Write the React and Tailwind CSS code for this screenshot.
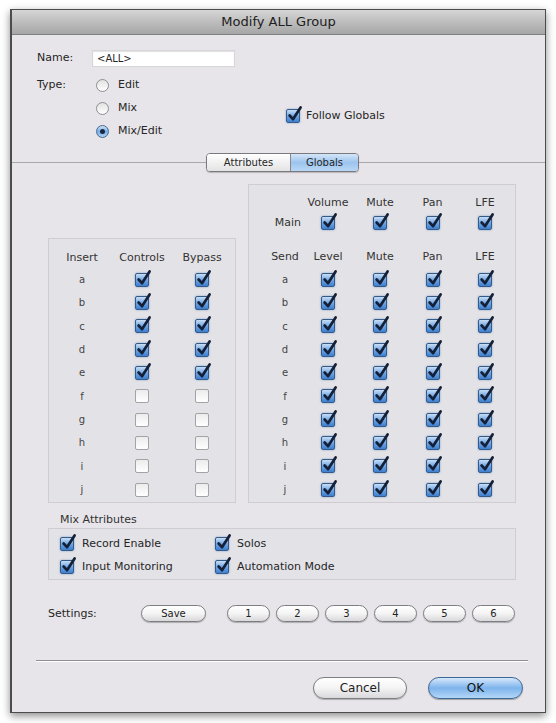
import React from "react";

const sends = ["a", "b", "c", "d", "e", "f", "g", "h", "i", "j"];

function Check({ on }) {
  return (
    <span className="relative inline-block w-[14px] h-[14px] shrink-0">
      <span
        className={
          on
            ? "absolute inset-0 rounded-[2px] border border-[#345b88] bg-gradient-to-b from-[#c9def5] via-[#6fa5e3] to-[#3f7fcf] shadow-[0_0_2px_rgba(70,120,190,0.7)]"
            : "absolute inset-0 rounded-[2px] border border-[#a3a3a6] bg-gradient-to-b from-[#ececec] to-white"
        }
      />
      {on && (
        <svg className="absolute -top-[4px] left-0 w-[17px] h-[18px]" viewBox="0 0 17 18">
          <path
            d="M3.6 10.5 L7 14.2 L14.6 2.4"
            fill="none"
            stroke="#142038"
            strokeWidth="2.7"
            strokeLinecap="round"
            strokeLinejoin="round"
          />
        </svg>
      )}
    </span>
  );
}

function Radio({ on }) {
  return (
    <span
      className={
        on
          ? "w-[13px] h-[13px] rounded-full border border-[#47698f] bg-gradient-to-b from-[#cfe2f7] via-[#78aee8] to-[#aed2f5] flex items-center justify-center"
          : "w-[13px] h-[13px] rounded-full border border-[#8e8e92] bg-gradient-to-b from-[#e2e2e2] to-white"
      }
    >
      {on && <span className="w-[5px] h-[5px] rounded-full bg-[#1b2740]" />}
    </span>
  );
}

function Pill({ children, className }) {
  return (
    <div
      className={
        "flex items-center justify-center rounded-full border border-[#7e7e82] bg-gradient-to-b from-white via-[#f4f4f4] to-[#d9d9dc] shadow-[0_1px_1px_rgba(0,0,0,0.25)] text-[#222] " +
        className
      }
    >
      {children}
    </div>
  );
}

export default function App() {
  return (
    <div className="min-h-screen bg-white pt-[9px] pl-[10px] [font-family:'DejaVu_Sans','Liberation_Sans',sans-serif] text-[11px] text-[#262626]">
      <div className="w-[536px] h-[704px] border border-[#4c4c4e] border-l-2 bg-[#e7e5e9] flex flex-col shadow-[0_3px_8px_rgba(0,0,0,0.45)]">
        {/* title bar */}
        <div className="h-[25px] shrink-0 flex items-center justify-center border-b border-[#7f7f82] bg-gradient-to-b from-[#d6d6d6] via-[#bdbdbd] to-[#a6a6a6] text-[13px] text-[#202020]">
          Modify ALL Group
        </div>

        {/* name / type */}
        <div className="pl-[25px]">
          <div className="mt-[14px] h-[18px] flex items-center">
            <div className="w-[55px]">Name:</div>
            <div className="w-[143px] h-[17px] bg-white border border-[#d6d6d6] shadow-[inset_0_1px_1px_rgba(0,0,0,0.12)] flex items-center pl-[4px] text-[10px]">
              &lt;ALL&gt;
            </div>
          </div>
          <div className="mt-[7px] flex">
            <div className="w-[55px] h-[23px] flex items-center">Type:</div>
            <div className="ml-[4px] w-[190px] flex flex-col">
              {[
                ["Edit", false],
                ["Mix", false],
                ["Mix/Edit", true],
              ].map(([t, on]) => (
                <div key={t} className="h-[23px] flex items-center gap-[9px]">
                  <Radio on={on} />
                  <span>{t}</span>
                </div>
              ))}
            </div>
            <div className="mt-[35px] h-[14px] flex items-center gap-[6px]">
              <Check on />
              <span>Follow Globals</span>
            </div>
          </div>
        </div>

        {/* tabs */}
        <div className="mt-[10px] h-[19px] flex items-center">
          <div className="w-[194px] h-px bg-[#a8a7ab]" />
          <div className="flex h-[19px] rounded-[4px] border border-[#7a7a7e] overflow-hidden text-[10px] shadow-[0_1px_1px_rgba(0,0,0,0.2)]">
            <div className="w-[84px] flex items-center justify-center bg-gradient-to-b from-white to-[#e3e3e3] border-r border-[#8a8a8e]">
              Attributes
            </div>
            <div className="w-[67px] flex items-center justify-center bg-gradient-to-b from-[#d5e6f8] via-[#9cc4ee] to-[#b9d7f5]">
              Globals
            </div>
          </div>
          <div className="flex-1 h-px bg-[#a8a7ab]" />
        </div>

        {/* globals tables */}
        <div className="mt-[12px] pl-[36px] flex items-end gap-[12px]">
          <div className="w-[188px] border border-[#cfcdd2] bg-[#e3e2e6] pt-[9px] pb-[1px] pl-[3px]">
            <div className="grid grid-cols-[60px_60px_60px] h-[20px] items-center text-[#333]">
              <div className="flex justify-center whitespace-nowrap">Insert</div>
              <div className="flex justify-center whitespace-nowrap">Controls</div>
              <div className="flex justify-center whitespace-nowrap">Bypass</div>
            </div>
            {sends.map((s, i) => (
              <div key={s} className="grid grid-cols-[60px_60px_60px] h-[23.33px] items-center">
                <div className="flex justify-center text-[10px] text-[#444]">{s}</div>
                <div className="flex justify-center">
                  <Check on={i < 5} />
                </div>
                <div className="flex justify-center">
                  <Check on={i < 5} />
                </div>
              </div>
            ))}
          </div>

          <div className="w-[268px] border border-[#cfcdd2] bg-[#e3e2e6] pt-[9px] pb-[1px] pl-[19px]">
            <div className="grid grid-cols-[34px_52px_52px_53px_52px] h-[18px] items-center text-[#333]">
              <div />
              <div className="flex justify-center">Volume</div>
              <div className="flex justify-center">Mute</div>
              <div className="flex justify-center">Pan</div>
              <div className="flex justify-center">LFE</div>
            </div>
            <div className="grid grid-cols-[34px_52px_52px_53px_52px] h-[22px] items-center">
              <div className="flex justify-end pr-[1px] text-[#333]">Main</div>
              {[0, 1, 2, 3].map((k) => (
                <div key={k} className="flex justify-center">
                  <Check on />
                </div>
              ))}
            </div>
            <div className="mt-[12px] grid grid-cols-[34px_52px_52px_53px_52px] h-[22px] items-center text-[#333]">
              <div className="flex justify-center">Send</div>
              <div className="flex justify-center">Level</div>
              <div className="flex justify-center">Mute</div>
              <div className="flex justify-center">Pan</div>
              <div className="flex justify-center">LFE</div>
            </div>
            {sends.map((s) => (
              <div key={s} className="grid grid-cols-[34px_52px_52px_53px_52px] h-[23.33px] items-center">
                <div className="flex justify-center text-[10px] text-[#444]">{s}</div>
                {[0, 1, 2, 3].map((k) => (
                  <div key={k} className="flex justify-center">
                    <Check on />
                  </div>
                ))}
              </div>
            ))}
          </div>
        </div>

        {/* mix attributes */}
        <div className="pl-[36px]">
          <div className="mt-[10px] h-[14px] flex items-center pl-[12px] text-[#333]">Mix Attributes</div>
          <div className="mt-[1px] w-[468px] border border-[#cfcdd2] bg-[#e3e2e6] pt-[3px] pb-[1px] pl-[11px]">
            <div className="grid grid-cols-[155px_200px]">
              {["Record Enable", "Solos", "Input Monitoring", "Automation Mode"].map((t) => (
                <div key={t} className="h-[23px] flex items-center gap-[8px]">
                  <Check on />
                  <span>{t}</span>
                </div>
              ))}
            </div>
          </div>

          {/* settings */}
          <div className="mt-[25px] h-[17px] flex items-center">
            <div className="w-[93px]">Settings:</div>
            <Pill className="w-[65px] h-[17px] text-[10px]">Save</Pill>
            <div className="ml-[21px] flex gap-[6px]">
              {["1", "2", "3", "4", "5", "6"].map((n) => (
                <Pill key={n} className="w-[43px] h-[17px] text-[10px]">
                  {n}
                </Pill>
              ))}
            </div>
          </div>
        </div>

        {/* separator */}
        <div className="mt-[38px] ml-[24px] mr-[17px] h-px bg-[#8e8e92] shadow-[0_1px_0_#ffffff]" />

        {/* buttons */}
        <div className="mt-[16px] flex justify-end gap-[21px] pr-[22px]">
          <Pill className="w-[94px] h-[22px] text-[12px]">Cancel</Pill>
          <div className="w-[95px] h-[22px] rounded-full border border-[#3f6795] bg-gradient-to-b from-[#d6e8fa] via-[#7db4ec] to-[#b4d7f7] shadow-[0_1px_1px_rgba(0,0,0,0.3)] flex items-center justify-center text-[12px] text-[#111]">
            OK
          </div>
        </div>
      </div>
    </div>
  );
}
